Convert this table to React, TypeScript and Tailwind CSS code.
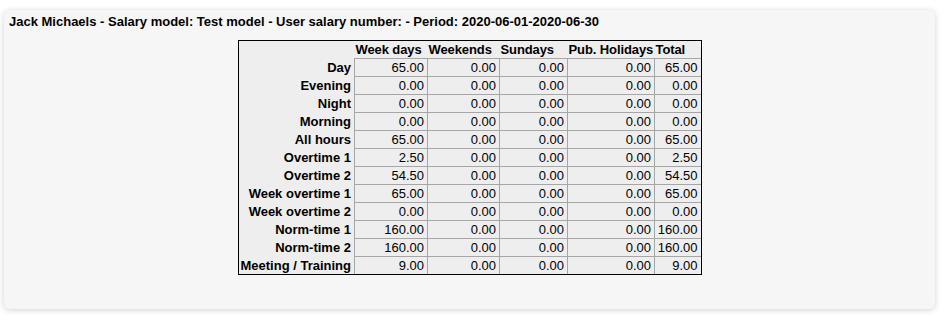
import React from "react";

const cols = ["Week days", "Weekends", "Sundays", "Pub. Holidays", "Total"];
const rows: [string, string[]][] = [
  ["Day", ["65.00", "0.00", "0.00", "0.00", "65.00"]],
  ["Evening", ["0.00", "0.00", "0.00", "0.00", "0.00"]],
  ["Night", ["0.00", "0.00", "0.00", "0.00", "0.00"]],
  ["Morning", ["0.00", "0.00", "0.00", "0.00", "0.00"]],
  ["All hours", ["65.00", "0.00", "0.00", "0.00", "65.00"]],
  ["Overtime 1", ["2.50", "0.00", "0.00", "0.00", "2.50"]],
  ["Overtime 2", ["54.50", "0.00", "0.00", "0.00", "54.50"]],
  ["Week overtime 1", ["65.00", "0.00", "0.00", "0.00", "65.00"]],
  ["Week overtime 2", ["0.00", "0.00", "0.00", "0.00", "0.00"]],
  ["Norm-time 1", ["160.00", "0.00", "0.00", "0.00", "160.00"]],
  ["Norm-time 2", ["160.00", "0.00", "0.00", "0.00", "160.00"]],
  ["Meeting / Training", ["9.00", "0.00", "0.00", "0.00", "9.00"]],
];
const widths = [116, 73, 72, 68, 87, 46];

export default function App() {
  return (
    <div className="bg-white w-[951px] h-[324px] pt-[10px] pl-[4px]" style={{ fontFamily: '"Liberation Sans", Arial, sans-serif' }}>
      <div className="w-[931px] h-[299px] rounded-[6px] bg-[#f6f6f6] shadow-[0_1px_6px_rgba(0,0,0,0.18)] px-[5px] pt-[4px]">
        <div className="text-[13px] font-bold leading-[16px] text-black whitespace-nowrap">
          Jack Michaels - Salary model: Test model - User salary number: - Period: 2020-06-01-2020-06-30
        </div>
        <div className="flex justify-center mt-[10px]">
          <div className="border border-black bg-[#eeeeee] w-[464px]">
            <table className="table-fixed border-collapse text-[13px] text-black w-[462px]">
              <colgroup>
                {widths.map((w, i) => (
                  <col key={i} style={{ width: w }} />
                ))}
              </colgroup>
              <thead>
                <tr className="h-[17px]">
                  <th className="p-0"></th>
                  {cols.map((c) => (
                    <th key={c} className="p-0 pl-[1px] text-left font-bold leading-[15px] whitespace-nowrap tracking-[-0.1px]">
                      {c}
                    </th>
                  ))}
                </tr>
              </thead>
              <tbody>
                {rows.map(([label, vals]) => (
                  <tr key={label} className="h-[18px]">
                    <th className="p-0 pr-[3px] text-right font-bold leading-[15px] whitespace-nowrap">{label}</th>
                    {vals.map((v, i) => (
                      <td key={i} className="p-0 pr-[3px] text-right leading-[15px] border-t border-l border-[#a6a6a6]">
                        {v}
                      </td>
                    ))}
                  </tr>
                ))}
              </tbody>
            </table>
          </div>
        </div>
      </div>
    </div>
  );
}
